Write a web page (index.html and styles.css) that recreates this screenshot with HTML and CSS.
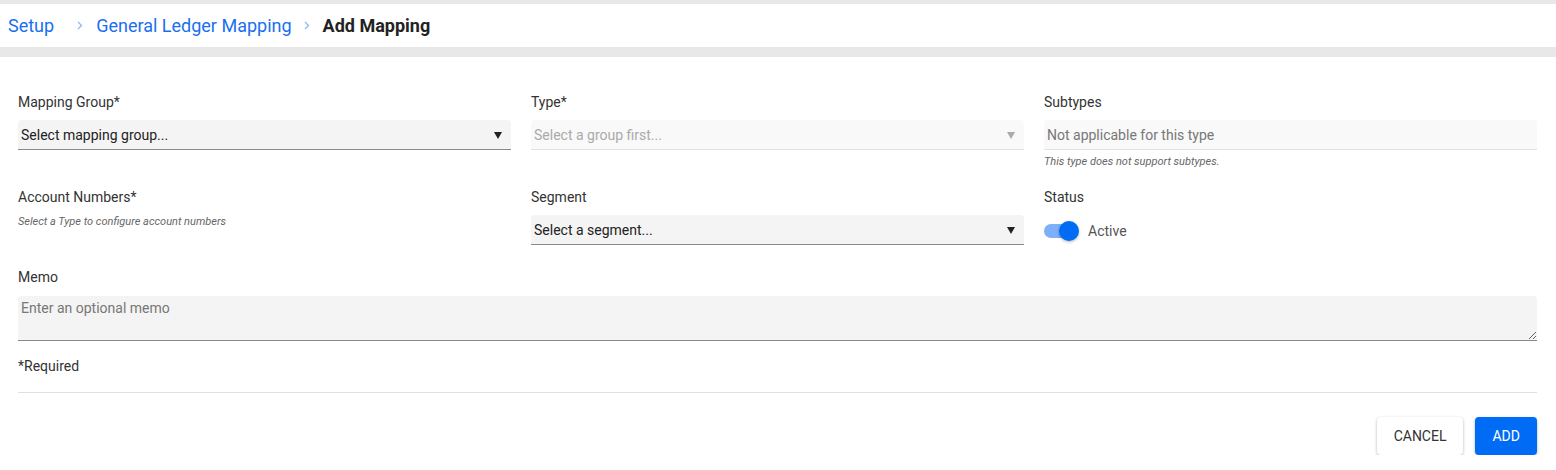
FILE: index.html
```html
<!DOCTYPE html>
<html lang="en">
<head>
    <meta charset="UTF-8">
    <meta name="viewport" content="width=device-width, initial-scale=1.0">
    <title>Add Mapping</title>
    <link rel="stylesheet" href="styles.css">
</head>
<body>
    <header class="page-header">
        <nav class="breadcrumb">
            <a href="#" class="crumb crumb-first">Setup</a>
            <svg class="chevron" width="6" height="9" viewBox="0 0 6 9"><polyline points="1,1 4.5,4.5 1,8" fill="none" stroke="#8fb6f5" stroke-width="1.3"/></svg>
            <a href="#" class="crumb">General Ledger Mapping</a>
            <svg class="chevron" width="6" height="9" viewBox="0 0 6 9"><polyline points="1,1 4.5,4.5 1,8" fill="none" stroke="#8fb6f5" stroke-width="1.3"/></svg>
            <span class="crumb-current">Add Mapping</span>
        </nav>
    </header>

    <form class="mapping-form">
        <div class="field-grid">
            <div class="field">
                <label for="group">Mapping Group*</label>
                <div class="select-wrap">
                    <select id="group">
                        <option>Select mapping group...</option>
                    </select>
                </div>
            </div>

            <div class="field">
                <label for="type">Type*</label>
                <div class="select-wrap disabled">
                    <select id="type" disabled>
                        <option>Select a group first...</option>
                    </select>
                </div>
            </div>

            <div class="field">
                <label for="subtypes">Subtypes</label>
                <input type="text" id="subtypes" class="text-input" placeholder="Not applicable for this type" disabled>
                <p class="hint hint-below">This type does not support subtypes.</p>
            </div>

            <div class="field">
                <label>Account Numbers*</label>
                <p class="hint">Select a Type to configure account numbers</p>
            </div>

            <div class="field">
                <label for="segment">Segment</label>
                <div class="select-wrap">
                    <select id="segment">
                        <option>Select a segment...</option>
                    </select>
                </div>
            </div>

            <div class="field">
                <label>Status</label>
                <div class="toggle-row">
                    <span class="toggle">
                        <span class="toggle-track"></span>
                        <span class="toggle-thumb"></span>
                    </span>
                    <span class="toggle-label">Active</span>
                </div>
            </div>
        </div>

        <div class="field memo-field">
            <label for="memo">Memo</label>
            <textarea id="memo" placeholder="Enter an optional memo"></textarea>
        </div>

        <p class="required-note">*Required</p>

        <div class="actions">
            <button type="button" class="btn btn-cancel">Cancel</button>
            <button type="button" class="btn btn-add">Add</button>
        </div>
    </form>
</body>
</html>
```

FILE: styles.css
```css
* {
    margin: 0;
    padding: 0;
    box-sizing: border-box;
}

body {
    font-family: Roboto, "Liberation Sans", Arial, sans-serif;
    background-color: #fff;
    color: #333;
}

/* header / breadcrumb */
.page-header {
    border-top: 4px solid #e8e8e8;
    border-bottom: 10px solid #e8e8e8;
    height: 57px;
    background-color: #fff;
}

.breadcrumb {
    display: flex;
    align-items: center;
    height: 43px;
    padding-left: 8px;
    font-size: 18px;
}

.crumb {
    color: #1a6ff0;
    text-decoration: none;
}

.crumb-first {
    margin-right: 11px;
}

.chevron {
    margin: 0 13px 0 12px;
}

.crumb-current {
    color: #222;
    font-weight: 700;
}

/* form */
.mapping-form {
    padding: 37px 19px 0 18px;
}

.field-grid {
    display: grid;
    grid-template-columns: repeat(3, 1fr);
    column-gap: 20px;
    row-gap: 21px;
}

.field {
    display: flex;
    flex-direction: column;
}

label {
    font-size: 14px;
    line-height: 16px;
    color: #333;
    margin-bottom: 10px;
}

.select-wrap {
    position: relative;
}

.select-wrap::after {
    content: "";
    position: absolute;
    right: 9px;
    top: 12px;
    border-left: 4.5px solid transparent;
    border-right: 4.5px solid transparent;
    border-top: 7px solid #222;
    pointer-events: none;
}

.select-wrap.disabled::after {
    border-top-color: #aaa;
}

select, .text-input {
    display: block;
    width: 100%;
    height: 30px;
    padding: 0 3px;
    font-family: inherit;
    font-size: 14px;
    color: #222;
    background-color: #f4f4f4;
    border: none;
    border-bottom: 1px solid #8a8a8a;
    border-radius: 4px 4px 0 0;
    appearance: none;
    -webkit-appearance: none;
    outline: none;
}

select:disabled {
    color: #aaa;
    background-color: #f9f9f9;
    border-bottom-color: #e2e2e2;
    opacity: 1;
}

.text-input:disabled {
    background-color: #f9f9f9;
    border-bottom-color: #e2e2e2;
}

.text-input::placeholder {
    color: #777;
}

.hint {
    font-size: 11px;
    line-height: 13px;
    font-style: italic;
    color: #666;
}

.hint-below {
    margin-top: 5px;
}

.toggle-row {
    display: flex;
    align-items: center;
    height: 30px;
    padding-top: 2px;
}

.toggle {
    position: relative;
    width: 35px;
    height: 20px;
    display: inline-block;
}

.toggle-track {
    position: absolute;
    left: 0;
    top: 3px;
    width: 34px;
    height: 14px;
    border-radius: 7px;
    background-color: #7db0f8;
}

.toggle-thumb {
    position: absolute;
    right: 0;
    top: 0;
    width: 20px;
    height: 20px;
    border-radius: 50%;
    background-color: #006cf5;
    box-shadow: 0 1px 3px rgba(0, 0, 0, 0.3);
}

.toggle-label {
    margin-left: 9px;
    font-size: 14px;
    color: #555;
}

.memo-field {
    margin-top: 24px;
}

.memo-field label {
    margin-bottom: 11px;
}

textarea {
    display: block;
    width: 100%;
    height: 45px;
    padding: 4px 3px;
    font-family: inherit;
    font-size: 14px;
    color: #222;
    background-color: #f4f4f4;
    border: none;
    border-bottom: 1px solid #8a8a8a;
    border-radius: 4px 4px 0 0;
    outline: none;
}

textarea::placeholder {
    color: #777;
}

.required-note {
    margin-top: 17px;
    font-size: 14px;
    line-height: 16px;
    color: #333;
    padding-bottom: 18px;
    border-bottom: 1px solid #e0e0e0;
}

.actions {
    display: flex;
    justify-content: flex-end;
    gap: 12px;
    margin-top: 24px;
}

.btn {
    height: 38px;
    padding: 0 17px;
    font-family: inherit;
    font-size: 14px;
    text-transform: uppercase;
    border: none;
    border-radius: 4px;
    cursor: pointer;
    box-shadow: 0 1px 3px rgba(0, 0, 0, 0.3);
}

.btn-cancel {
    background-color: #fff;
    color: #333;
}

.btn-add {
    background-color: #006cf5;
    color: #fff;
}
```
